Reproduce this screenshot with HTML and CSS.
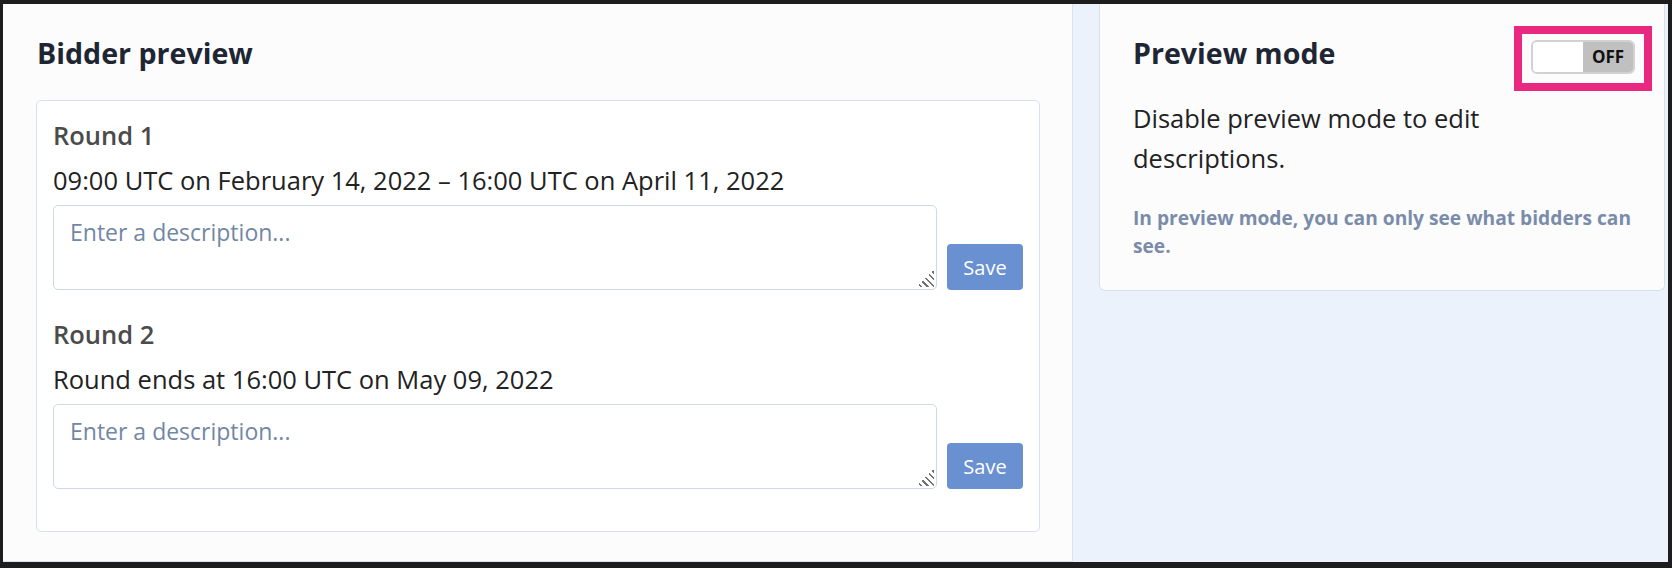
FILE: index.html
```html
<!DOCTYPE html>
<html lang="en">
<head>
    <meta charset="UTF-8">
    <title>Bidder preview</title>
    <link rel="stylesheet" href="styles.css">
</head>
<body>
    <div class="frame">
        <div class="main">
            <h1 class="title">Bidder preview</h1>

            <div class="rounds">
                <div class="round">
                    <h3 class="round-name">Round 1</h3>
                    <div class="round-dates">09:00 UTC on February 14, 2022 – 16:00 UTC on April 11, 2022</div>
                    <div class="desc-row">
                        <textarea class="desc" placeholder="Enter a description..."></textarea>
                        <button class="save">Save</button>
                    </div>
                </div>

                <div class="round">
                    <h3 class="round-name">Round 2</h3>
                    <div class="round-dates">Round ends at 16:00 UTC on May 09, 2022</div>
                    <div class="desc-row">
                        <textarea class="desc" placeholder="Enter a description..."></textarea>
                        <button class="save">Save</button>
                    </div>
                </div>
            </div>
        </div>

        <div class="side">
            <div class="side-card">
                <div class="side-head">
                    <h2 class="title">Preview mode</h2>
                    <!-- highlighted toggle -->
                    <div class="highlight">
                        <div class="toggle">
                            <span class="toggle-knob"></span>
                            <span class="toggle-label">OFF</span>
                        </div>
                    </div>
                </div>
                <p class="side-text">Disable preview mode to edit descriptions.</p>
                <p class="side-note">In preview mode, you can only see what bidders can see.</p>
            </div>
        </div>
    </div>
</body>
</html>
```

FILE: styles.css
```css
body {
    margin: 0;
    font-family: 'Open Sans', 'Noto Sans', sans-serif;
    color: #222;
    background-color: #1a1a1a;
}

.frame {
    display: flex;
    height: 558px;
    border-style: solid;
    border-color: #1d1d1d;
    border-width: 4px 4px 6px 3px;
    background-color: #ecf2fc;
    overflow: hidden;
}

.main {
    width: 1070px;
    padding: 0 32px 0 33px;
    box-sizing: border-box;
    background-color: #fcfcfd;
    border-right: 1px solid #d9e3f1;
    border-bottom: 1px solid #d9e3f1;
}

.title {
    margin: 0;
    font-size: 28.6px;
    font-weight: 700;
    line-height: 40px;
    color: #1f2633;
}

.main .title {
    margin: 29px 0 0 1px;
}

.rounds {
    margin-top: 27px;
    padding: 16px 16px 42px 16px;
    border: 1px solid #d6e0ee;
    border-radius: 5px;
    background-color: #fff;
}

.round + .round {
    margin-top: 26px;
}

.round-name {
    margin: 0 0 9px;
    font-size: 25.5px;
    font-weight: 600;
    line-height: 36px;
    color: #4b4b4b;
}

.round-dates {
    font-size: 25.5px;
    line-height: 36px;
    color: #222;
}

.desc-row {
    display: flex;
    align-items: flex-end;
    gap: 10px;
    margin-top: 7px;
}

/* hatched corner grip drawn as background */
.desc {
    flex: 1;
    height: 85px;
    box-sizing: border-box;
    padding: 10px 16px 8px;
    border: 1px solid #cdd8e8;
    border-radius: 5px;
    font-family: 'Open Sans', 'Noto Sans', sans-serif;
    font-size: 23px;
    color: #222;
    resize: none;
    background:
        linear-gradient(135deg, #fff 50%, transparent 50%) right 2px bottom 2px / 18px 18px no-repeat,
        repeating-linear-gradient(45deg, #fff 0 3px, #727272 3px 4.7px) right 2px bottom 2px / 18px 18px no-repeat,
        #fff;
}

.desc::placeholder {
    color: #7287a6;
}

.save {
    width: 76px;
    height: 46px;
    border: none;
    border-radius: 4px;
    background-color: #6990d0;
    color: #fff;
    font-family: 'Open Sans', 'Noto Sans', sans-serif;
    font-size: 20px;
}

.side {
    flex: 1;
    padding: 0 3px 0 26px;
}

.side-card {
    padding: 29px 29px 30px 32px;
    border: 1px solid #d6e0ee;
    border-top: none;
    border-radius: 0 0 6px 6px;
    background-color: #fcfcfd;
}

.side-head {
    display: flex;
    justify-content: space-between;
    align-items: flex-start;
}

.side-head .title {
    margin-left: 1px;
}

.highlight {
    margin: -7px -17px 0 0;
    padding: 6px 9px 9px 9px;
    border: 8px solid #e8297f;
}

.toggle {
    display: flex;
    width: 104px;
    height: 34px;
    box-sizing: border-box;
    border: 2px solid #d2d2d2;
    border-radius: 6px;
    overflow: hidden;
}

.toggle-knob {
    width: 50px;
    background-color: #fff;
}

.toggle-label {
    flex: 1;
    background-color: #c0c0c0;
    font-size: 17px;
    font-weight: 700;
    line-height: 30px;
    text-align: center;
    color: #111;
}

.side-text {
    margin: 7px 0 0 1px;
    font-size: 25.5px;
    line-height: 40px;
    color: #222;
}

.side-note {
    margin: 26px 0 0 1px;
    font-size: 19.2px;
    font-weight: 700;
    line-height: 28px;
    color: #7a8ca9;
}
```
